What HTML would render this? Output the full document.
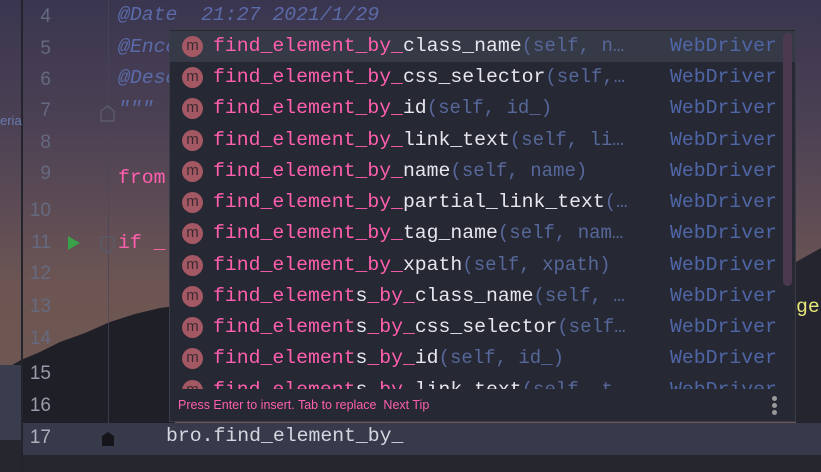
<!DOCTYPE html>
<html><head><meta charset="utf-8"><style>
*{margin:0;padding:0;box-sizing:border-box}
body{width:821px;height:472px;overflow:hidden;position:relative;background:#25262e;font-family:"Liberation Mono","DejaVu Sans Mono",monospace}
.bg{position:absolute;left:0;top:0;width:821px;height:472px;background:linear-gradient(180deg,#3a3650 0%,#4a4053 25%,#5e4c55 45%,#6c5553 60%,#6e5652 70%)}
.abs{position:absolute;white-space:pre}
.ln{position:absolute;width:40px;text-align:right;left:11px;font-family:"Liberation Sans",sans-serif;font-size:19px;color:#666a80}
.code{position:absolute;font-size:19.8px;white-space:pre}
#pop{position:absolute;left:169px;top:29px;width:627px;height:393px;background:#262833;border:1px solid #3a3c48}
.row{position:absolute;left:0;width:610px;height:31px;font-size:19.8px;line-height:31px;white-space:pre}
.row .m{position:absolute;left:12px;top:5px;width:21px;height:21px;border-radius:50%;background:#a35864;color:#3a2a30;font-family:"Liberation Sans",sans-serif;font-size:15px;line-height:20px;text-align:center}
.row .t{position:absolute;left:43px;top:0}
.p{color:#ff5fae}.w{color:#e6e6ee}.g{color:#56679a;font-size:19px}
.row .wd{position:absolute;left:500px;color:#4f66a6}
</style></head><body>
<div class="bg"></div>
<svg class="abs" style="left:0;top:0" width="821" height="472">
<polygon points="0,372 21,360 40,352 60,342 85,333 110,322 135,314 160,308 175,306 175,472 0,472" fill="#1f1f28"/>
<polygon points="796,262 821,248 821,472 796,472" fill="#252530"/>
<rect x="0" y="365" width="21" height="107" fill="#3a3d4e"/>
<rect x="0" y="440" width="21" height="32" fill="#26262e"/>
<rect x="21" y="0" width="2" height="472" fill="#24242c"/>
<rect x="108" y="0" width="1" height="472" fill="#4a4658" opacity=".7"/>
<rect x="23" y="423" width="798" height="32" fill="#373a4a"/>
<rect x="23" y="455" width="798" height="17" fill="#25262e"/>
<polygon points="68,236 80,243 68,250" fill="#3aa04a"/>
<path d="M101,237h13v10l-6.5,6l-6.5,-6z" fill="none" stroke="#5a5a66" stroke-width="1.5"/>
<path d="M101,111l6.5,-5l6.5,5v10h-13z" fill="none" stroke="#5a5a66" stroke-width="1.5"/>
<path d="M102,436l6,-4l6,4v10h-12z" fill="#15151b"/>
</svg>
<div class="abs" style="left:0;top:113px;font:13px 'Liberation Sans',sans-serif;color:#6a7ab0">eria</div>
<div class="ln" style="top:6px">4</div>
<div class="ln" style="top:38px">5</div>
<div class="ln" style="top:69px">6</div>
<div class="ln" style="top:100px">7</div>
<div class="ln" style="top:132px">8</div>
<div class="ln" style="top:163px">9</div>
<div class="ln" style="top:200px">10</div>
<div class="ln" style="top:232px">11</div>
<div class="ln" style="top:263px">12</div>
<div class="ln" style="top:296px">13</div>
<div class="ln" style="top:328px">14</div>
<div class="ln" style="top:363px;color:#9a9aa8">15</div>
<div class="ln" style="top:395px;color:#9a9aa8">16</div>
<div class="ln" style="top:427px;color:#b0b0bc">17</div>
<div class="code" style="left:118px;top:4px;color:#5b6aa8;font-style:italic">@Date  21:27 2021/1/29</div>
<div class="code" style="left:118px;top:36px;color:#5b6aa8;font-style:italic">@Enco</div>
<div class="code" style="left:118px;top:67px;color:#5b6aa8;font-style:italic">@Desc</div>
<div class="code" style="left:118px;top:98px;color:#5b6aa8;font-style:italic">"""</div>
<div class="code" style="left:118px;top:167px;color:#ff5fae">from</div>
<div class="code" style="left:118px;top:232px;color:#ff5fae">if _</div>
<div class="code" style="left:796px;top:296px;color:#e8e87a">ged</div>
<div class="code" style="left:166px;top:425px;color:#d6d6e0">bro.find_element_by_</div>
<div id="pop">
<div class="row" style="top:1px;background:#363946;width:625px"><span class="m">m</span><span class="t"><span class="p">find_element_by_</span><span class="w">class_name</span><span class="g">(self, n…</span></span><span class="wd">WebDriver</span></div>
<div class="row" style="top:32px"><span class="m">m</span><span class="t"><span class="p">find_element_by_</span><span class="w">css_selector</span><span class="g">(self,…</span></span><span class="wd">WebDriver</span></div>
<div class="row" style="top:63px"><span class="m">m</span><span class="t"><span class="p">find_element_by_</span><span class="w">id</span><span class="g">(self, id_)</span></span><span class="wd">WebDriver</span></div>
<div class="row" style="top:95px"><span class="m">m</span><span class="t"><span class="p">find_element_by_</span><span class="w">link_text</span><span class="g">(self, li…</span></span><span class="wd">WebDriver</span></div>
<div class="row" style="top:126px"><span class="m">m</span><span class="t"><span class="p">find_element_by_</span><span class="w">name</span><span class="g">(self, name)</span></span><span class="wd">WebDriver</span></div>
<div class="row" style="top:157px"><span class="m">m</span><span class="t"><span class="p">find_element_by_</span><span class="w">partial_link_text</span><span class="g">(…</span></span><span class="wd">WebDriver</span></div>
<div class="row" style="top:188px"><span class="m">m</span><span class="t"><span class="p">find_element_by_</span><span class="w">tag_name</span><span class="g">(self, nam…</span></span><span class="wd">WebDriver</span></div>
<div class="row" style="top:220px"><span class="m">m</span><span class="t"><span class="p">find_element_by_</span><span class="w">xpath</span><span class="g">(self, xpath)</span></span><span class="wd">WebDriver</span></div>
<div class="row" style="top:251px"><span class="m">m</span><span class="t"><span class="p">find_element</span><span class="w">s</span><span class="p">_by_</span><span class="w">class_name</span><span class="g">(self, …</span></span><span class="wd">WebDriver</span></div>
<div class="row" style="top:282px"><span class="m">m</span><span class="t"><span class="p">find_element</span><span class="w">s</span><span class="p">_by_</span><span class="w">css_selector</span><span class="g">(self…</span></span><span class="wd">WebDriver</span></div>
<div class="row" style="top:313px"><span class="m">m</span><span class="t"><span class="p">find_element</span><span class="w">s</span><span class="p">_by_</span><span class="w">id</span><span class="g">(self, id_)</span></span><span class="wd">WebDriver</span></div>
<div style="position:absolute;left:0;top:345px;width:610px;height:14px;overflow:hidden"><div class="row" style="top:0"><span class="m">m</span><span class="t"><span class="p">find_element</span><span class="w">s</span><span class="p">_by_</span><span class="w">link_text</span><span class="g">(self, t…</span></span><span class="wd">WebDriver</span></div></div>
<div style="position:absolute;left:613px;top:3px;width:9px;height:253px;border-radius:5px;background:#4b3a4f"></div>
<div class="abs" style="left:8px;top:368px;font:12.5px 'Liberation Sans',sans-serif;color:#ff5fae">Press Enter to insert. Tab to replace  Next Tip</div>
<div style="position:absolute;left:602px;top:366px;width:5px;height:5px;border-radius:50%;background:#999"></div>
<div style="position:absolute;left:602px;top:373px;width:5px;height:5px;border-radius:50%;background:#999"></div>
<div style="position:absolute;left:602px;top:380px;width:5px;height:5px;border-radius:50%;background:#999"></div>
</div>
</body></html>
